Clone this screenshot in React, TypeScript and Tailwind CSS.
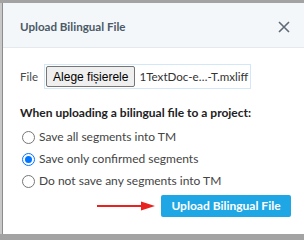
import React from "react";

function Radio({ checked }: { checked?: boolean }) {
  return checked ? (
    <span className="w-[13px] h-[13px] rounded-full border border-[#0075ff] flex items-center justify-center shrink-0 bg-white">
      <span className="w-[7px] h-[7px] rounded-full bg-[#0075ff]" />
    </span>
  ) : (
    <span className="w-[13px] h-[13px] rounded-full border border-[#767676] shrink-0 bg-white" />
  );
}

export default function App() {
  const font = { fontFamily: "Lato, 'Noto Sans', sans-serif" };
  return (
    <div className="w-[308px] h-[240px] bg-white overflow-hidden" style={font}>
      <div className="w-[304px] h-[234px] border-t-[3px] border-[#a3a3a3] flex">
        <div className="w-[3px] bg-[#c8c8c8] border-r border-[#8d8d8d]" />
        <div className="flex-1 flex flex-col bg-white">
          <div className="h-[45px] bg-[#f3f7fa] border-b border-[#e4e9ed] flex items-center justify-between pl-[17px] pr-[12px] pt-[3px]">
            <span className="text-[11.6px] font-bold text-[#4c5966]">Upload Bilingual File</span>
            <svg width="12" height="12" viewBox="0 0 12 12" className="mr-[2px]">
              <path d="M1 1 L11 11 M11 1 L1 11" stroke="#5f6b76" strokeWidth="1.6" />
            </svg>
          </div>
          <div className="flex items-center pl-[17px] mt-[16px]">
            <span className="text-[11.5px] text-[#4a4a4a] mr-[6px]">File</span>
            <div className="flex items-center h-[25px] border border-[#d3e7f6] px-[1px]">
              <button
                className="h-[21px] px-[6px] bg-[#efefef] border border-[#767676] rounded-[2px] text-[12px] text-black leading-none"
                style={{ fontFamily: "'Liberation Sans', Arial, sans-serif" }}
              >
                Alege fișierele
              </button>
              <span className="text-[11.6px] text-[#333] ml-[4px] pr-[1px]">1TextDoc-e…-T.mxliff</span>
            </div>
          </div>
          <div className="pl-[17px] mt-[15px] text-[12px] font-bold text-[#222]">
            When uploading a bilingual file to a project:
          </div>
          <div className="pl-[19px] mt-[8px] flex flex-col gap-[8px] text-[12px] text-[#444]">
            <label className="flex items-center gap-[4px] h-[14px]">
              <Radio />
              <span>Save all segments into TM</span>
            </label>
            <label className="flex items-center gap-[4px] h-[14px]">
              <Radio checked />
              <span>Save only confirmed segments</span>
            </label>
            <label className="flex items-center gap-[4px] h-[14px]">
              <Radio />
              <span>Do not save any segments into TM</span>
            </label>
          </div>
          <div className="flex items-center justify-end pr-[13px] mt-[7px]">
            <svg width="58" height="10" viewBox="0 0 58 10" className="mr-[6px]">
              <path d="M0 5 H48" stroke="#e8231f" strokeWidth="2" />
              <path d="M44 0.5 L58 5 L44 9.5 Z" fill="#e8231f" />
            </svg>
            <button className="h-[22px] w-[130px] bg-[#1ea7e4] rounded-[2px] text-white text-[12px] font-bold">
              Upload Bilingual File
            </button>
          </div>
        </div>
      </div>
      <div className="w-[304px] h-[6px] bg-[#a3a3a3]" />
    </div>
  );
}
